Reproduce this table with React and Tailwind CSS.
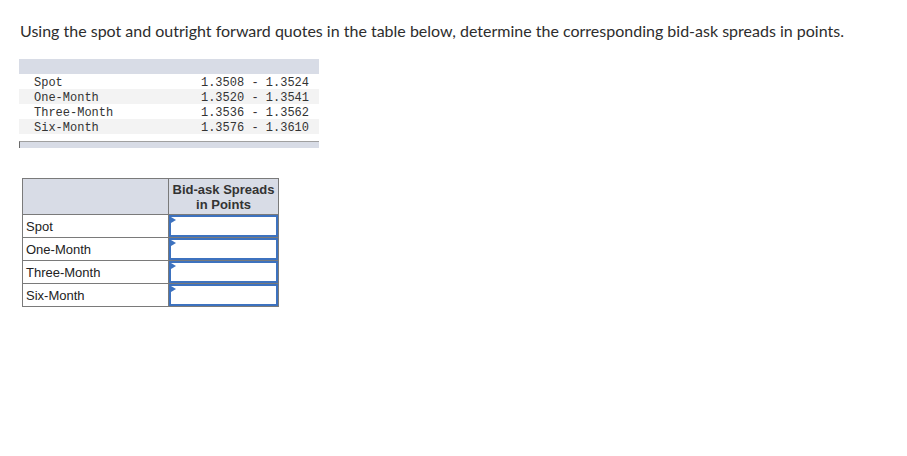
import React from 'react';

const quotes = [
  ['Spot', '1.3508 - 1.3524'],
  ['One-Month', '1.3520 - 1.3541'],
  ['Three-Month', '1.3536 - 1.3562'],
  ['Six-Month', '1.3576 - 1.3610'],
];

function AnswerCell() {
  return (
    <td className="border border-[#7a7a7a] p-0 align-top">
      <div className="relative h-[22px] border-2 border-[#3d72bf] bg-white">
        <span className="absolute left-0 top-0 h-0 w-0 border-y-[3px] border-l-[5px] border-y-transparent border-l-[#3d72bf]" />
      </div>
    </td>
  );
}

function App() {
  return (
    <div className="min-h-screen bg-white text-[#2d2d2d]">
      <p className="pl-[20px] pt-[21px] text-[16px] leading-[20px] font-['Lato',sans-serif]">
        Using the spot and outright forward quotes in the table below, determine the corresponding bid-ask spreads in points.
      </p>

      {/* quote table */}
      <div className="ml-[19px] mt-[18px] w-[300px] font-['Liberation_Mono',monospace] text-[12px] text-[#333]">
        <div className="h-[15px] bg-[#d8dce6]" />
        {quotes.map(([label, value], i) => (
          <div
            key={label}
            className={`flex h-[15px] items-start justify-between pl-[15px] pr-[10px] pt-[3px] leading-[13px] ${i % 2 === 1 ? 'bg-[#f3f3f3]' : 'bg-white'}`}
          >
            <span>{label}</span>
            <span>{value}</span>
          </div>
        ))}
        <div className="h-[7px]" />
        <div className="h-[7px] border-l border-t border-l-[#6b6b6b] border-t-[#a0a0a0] bg-[#d8dce6]" />
      </div>

      {/* answer table */}
      <table className="ml-[22px] mt-[30px] border-collapse font-['Liberation_Sans',sans-serif] text-[13px] text-[#222]">
        <thead>
          <tr className="h-[36px] bg-[#d8dce6]">
            <th className="w-[146px] border border-[#7a7a7a]" />
            <th className="w-[110px] border border-[#7a7a7a] text-[13px] font-bold leading-[15px] text-[#333]">
              Bid-ask Spreads
              <br />
              in Points
            </th>
          </tr>
        </thead>
        <tbody>
          {quotes.map(([label]) => (
            <tr key={label}>
              <td className="h-[23px] border border-[#7a7a7a] px-[3px] py-0 text-left leading-[15px]">{label}</td>
              <AnswerCell />
            </tr>
          ))}
        </tbody>
      </table>
    </div>
  );
}

export default App;
